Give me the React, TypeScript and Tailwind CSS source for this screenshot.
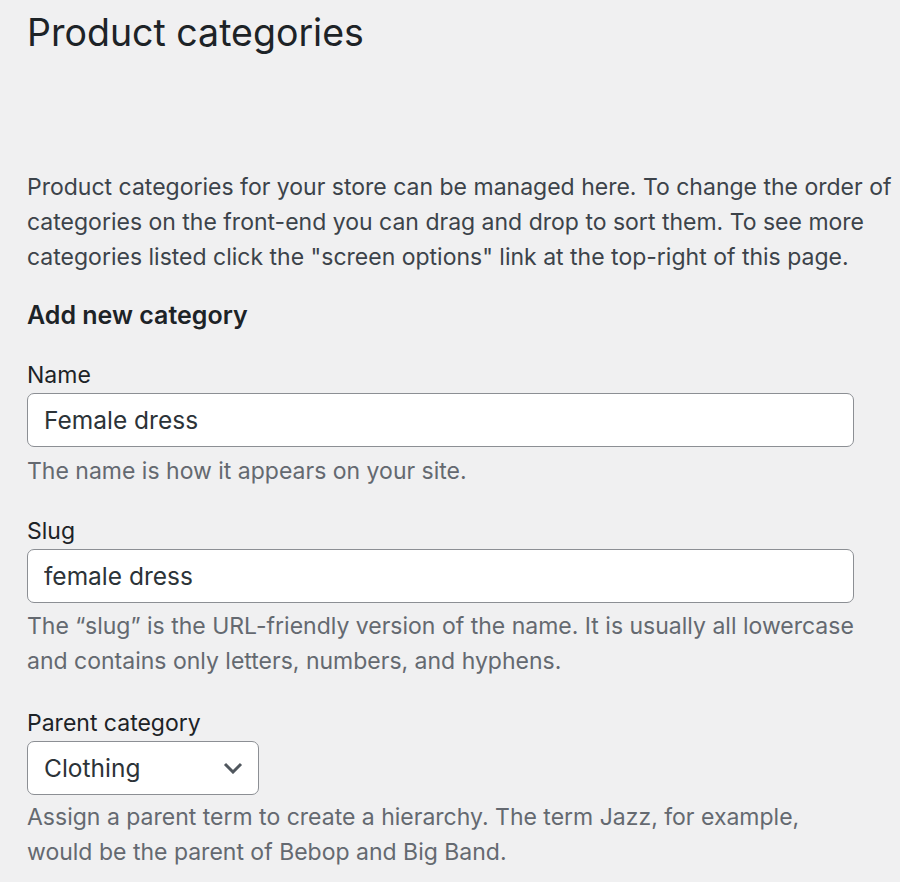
export default function App() {
  return (
    <div className="min-h-[882px] bg-[#f0f0f1] pl-[27px] pr-[2px] text-[#3c434a] [font-family:Inter,'Noto_Sans',sans-serif]">
      <h1 className="pt-[7px] text-[37.5px] leading-[52px] font-normal text-[#1d2327]">Product categories</h1>

      <p className="mt-[111px] text-[23px] leading-[35px] whitespace-nowrap">
        Product categories for your store can be managed here. To change the order of
        <br />
        categories on the front-end you can drag and drop to sort them. To see more
        <br />
        categories listed click the "screen options" link at the top-right of this page.
      </p>

      <h2 className="mt-[23px] text-[25px] leading-[34px] font-semibold text-[#1d2327]">Add new category</h2>

      <form className="mt-[26px]">
        <div>
          <label className="block text-[23px] leading-[35px] text-[#1d2327]">Name</label>
          <input
            defaultValue="Female dress"
            className="block h-[54px] w-[95%] rounded-[7px] border border-[#8c8f94] bg-white px-[16px] text-[24.5px] text-[#2c3338] outline-none"
          />
          <p className="mt-[7px] text-[23px] leading-[35px] text-[#646970]">The name is how it appears on your site.</p>
        </div>

        <div className="mt-[25px]">
          <label className="block text-[23px] leading-[35px] text-[#1d2327]">Slug</label>
          <input
            defaultValue="female dress"
            className="block h-[54px] w-[95%] rounded-[7px] border border-[#8c8f94] bg-white px-[16px] text-[24.5px] text-[#2c3338] outline-none"
          />
          <p className="mt-[6px] text-[23px] leading-[35px] text-[#646970] whitespace-nowrap">
            The “slug” is the URL-friendly version of the name. It is usually all lowercase
            <br />
            and contains only letters, numbers, and hyphens.
          </p>
        </div>

        <div className="mt-[27px]">
          <label className="block text-[23px] leading-[35px] text-[#1d2327]">Parent category</label>
          <div className="relative h-[54px] w-[232px]">
            <select
              defaultValue="clothing"
              className="h-full w-full appearance-none rounded-[7px] border border-[#8c8f94] bg-white pl-[16px] pr-[48px] text-[24.5px] text-[#2c3338] outline-none"
            >
              <option value="none">None</option>
              <option value="clothing">Clothing</option>
            </select>
            <svg
              className="pointer-events-none absolute right-[16px] top-1/2 -translate-y-1/2"
              width="20"
              height="12"
              viewBox="0 0 20 12"
              fill="none"
            >
              <path d="M2 2l8 8 8-8" stroke="#50575e" strokeWidth="3" />
            </svg>
          </div>
          <p className="mt-[5px] text-[23px] leading-[35px] text-[#646970] whitespace-nowrap">
            Assign a parent term to create a hierarchy. The term Jazz, for example,
            <br />
            would be the parent of Bebop and Big Band.
          </p>
        </div>
      </form>
    </div>
  );
}
